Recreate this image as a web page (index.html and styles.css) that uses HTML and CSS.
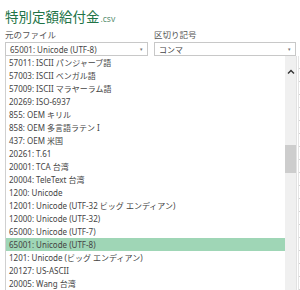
FILE: index.html
```html
<!DOCTYPE html>
<html lang="ja">
<head>
    <meta charset="UTF-8">
    <title>特別定額給付金.csv</title>
    <link rel="stylesheet" href="styles.css">
</head>
<body>
    <div class="page">
        <h1 class="title">特別定額給付金<span class="ext">.csv</span></h1>
        <div class="fields">
            <div class="field">
                <label>元のファイル</label>
                <div class="select">
                    <span>65001: Unicode (UTF-8)</span>
                    <span class="caret">▾</span>
                </div>
            </div>
            <div class="field">
                <label>区切り記号</label>
                <div class="select">
                    <span>コンマ</span>
                    <span class="caret">▾</span>
                </div>
            </div>
        </div>
        <div class="dropdown">
            <ul class="options">
                <li>57011: ISCII パンジャーブ語</li>
                <li>57003: ISCII ベンガル語</li>
                <li>57009: ISCII マラヤーラム語</li>
                <li>20269: ISO-6937</li>
                <li>855: OEM キリル</li>
                <li>858: OEM 多言語ラテン I</li>
                <li>437: OEM 米国</li>
                <li>20261: T.61</li>
                <li>20001: TCA 台湾</li>
                <li>20004: TeleText 台湾</li>
                <li>1200: Unicode</li>
                <li>12001: Unicode (UTF-32 ビッグ エンディアン)</li>
                <li>12000: Unicode (UTF-32)</li>
                <li>65000: Unicode (UTF-7)</li>
                <li class="selected">65001: Unicode (UTF-8)</li>
                <li>1201: Unicode (ビッグ エンディアン)</li>
                <li>20127: US-ASCII</li>
                <li>20005: Wang 台湾</li>
            </ul>
            <div class="scrollbar">
                <div class="arrow">
                    <svg width="8" height="5" viewBox="0 0 8 5"><path d="M1 4.5 L4 1.5 L7 4.5" fill="none" stroke="#333" stroke-width="1.4"/></svg>
                </div>
                <div class="thumb"></div>
            </div>
            <div class="grid-edge"></div>
        </div>
    </div>
</body>
</html>
```

FILE: styles.css
```css
body {
    margin: 0;
    background-color: white;
    font-family: "Noto Sans", "Noto Sans CJK JP", sans-serif;
    color: #444;
    overflow: hidden;
}

.page {
    padding: 7px 0 0 5px;
}

.title {
    margin: 0;
    height: 20px;
    font-size: 13.5px;
    line-height: 20px;
    font-weight: normal;
    color: #217346;
}

.ext {
    font-size: 8.5px;
    color: #5a8f70;
    margin-left: 1px;
}

.fields {
    display: grid;
    grid-template-columns: 143px 142px;
    gap: 6px;
    margin-top: 1px;
}

label {
    display: block;
    font-size: 8.5px;
    line-height: 13px;
    color: #555;
}

.select {
    display: flex;
    justify-content: space-between;
    align-items: center;
    height: 12px;
    margin-top: 1px;
    padding: 0 4px 0 4px;
    border: 1px solid #c8c8c8;
    font-size: 8px;
    color: #444;
}

.caret {
    font-size: 5px;
    color: #777;
}

.dropdown {
    display: flex;
    height: 240px;
    overflow: hidden;
}

.options {
    list-style: none;
    margin: 0;
    padding: 0;
    width: 280px;
    border-left: 1px solid #d0d0d0;
}

.options li {
    height: 13px;
    line-height: 13px;
    padding-left: 3px;
    font-size: 8px;
    white-space: nowrap;
    color: #444;
}

.options li.selected {
    background-color: #9fd6b6;
}

.scrollbar {
    width: 11px;
    background-color: #f0f0f0;
    border-right: 1px solid #e2e2e2;
}

.arrow {
    display: flex;
    justify-content: center;
    margin-top: 13px;
    height: 6px;
}

.thumb {
    margin-top: 70px;
    height: 28px;
    background-color: #cdcdcd;
}

.grid-edge {
    width: 1px;
    margin-left: 1px;
    border-left: 1px solid #e4e4e4;
    background: repeating-linear-gradient(to bottom, transparent 0, transparent 12px, #d6d6d6 12px, #d6d6d6 13px);
}
```
